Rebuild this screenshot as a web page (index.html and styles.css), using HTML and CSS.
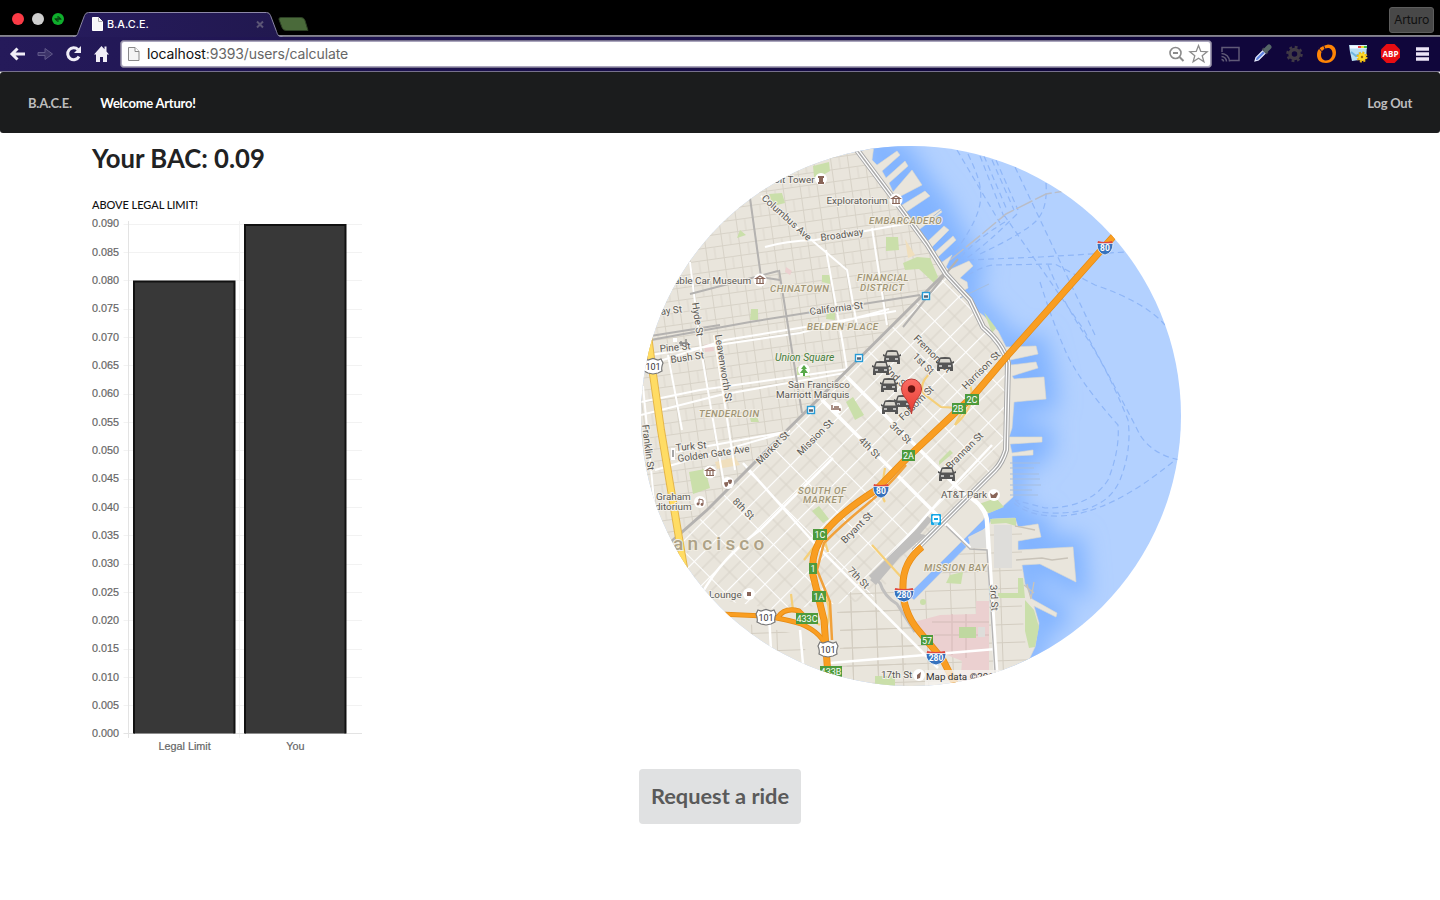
FILE: index.html
```html
<!DOCTYPE html>
<html lang="en">
<head>
<meta charset="utf-8">
<title>B.A.C.E.</title>
<link rel="stylesheet" href="styles.css">
</head>
<body>
<header class="browser">
  <div class="titlebar">
    <svg class="tabs" width="320" height="37" viewBox="0 0 320 37">
      <defs><linearGradient id="tabfill" x1="0" y1="0" x2="1" y2="0"><stop offset="0" stop-color="#261b5c"/><stop offset="1" stop-color="#21184f"/></linearGradient></defs>
      <circle cx="18" cy="19" r="6" fill="#fb3b46"/><circle cx="38" cy="19" r="6" fill="#cfcfcf"/><circle cx="58" cy="19" r="6" fill="#0fae2c"/>
      <path d="M54 18.500h3.500V22zM58.500 16v3.500H62z" fill="#06420f"/><path d="M55 19h6M58 16v6" stroke="#06420f"/>
      <path d="M73 37c4 0 4.500-2 5.500-5l6-16q1-3 4-3h178q3 0 4 3l6 16c1 3 1.500 5 6 5z" fill="url(#tabfill)"/>
      <path d="M73 36.500c4 0 4.500-2 5.500-5l6-16q1-3 4-3h178q3 0 4 3l6 16c1 3 1.500 5 6 5" fill="none" stroke="#8d88a8"/>
      <path d="M92.500 17.500h6l4 4v9h-10z" fill="#f7f7f7" stroke="#fff"/><path d="M98.500 17.500v4h4" fill="none" stroke="#aaa"/>
      <text x="107" y="28" class="tab-title">B.A.C.E.</text>
      <path d="M257 21.500l6 6M263 21.500l-6 6" stroke="#5b5575" stroke-width="2"/>
      <path d="M281 17.500h20q3 0 4 3l3 10h-22q-3 0-4-3l-3-8q-.5-2 2-2z" fill="#4a6a3a" stroke="#2c4024"/>
    </svg>
    <span class="profile">Arturo</span>
  </div>
  <div class="toolbar">
    <svg class="nav-icons" width="120" height="34" viewBox="0 37 120 34">
      <g fill="none" stroke="#f0edf7" stroke-width="3"><path d="M25 54H12M17.500 48.500L12 54l5.500 5.500"/><path d="M78 49.500a6 6 0 1 0 1 7"/></g>
      <path d="M81 46v7h-7z" fill="#f0edf7"/>
      <path d="M38 52.500h7v-4l7.500 5.500-7.500 5.500v-4h-7z" fill="#3c3369" stroke="#60598a"/>
      <path d="M94 54.500L101.500 46l3 3.200V46.500h2v5l2.500 3h-2V62h-4v-5h-3v5h-4v-7.500z" fill="#f0edf7"/>
    </svg>
    <div class="address">
      <svg width="16" height="20" viewBox="0 0 16 20"><path d="M2.500 3.500h6.500l4 4v9H2.500z" fill="#f5f5f5" stroke="#8a8a8a"/><path d="M9 3.500v4h4" fill="#fff" stroke="#8a8a8a"/></svg>
      <span class="url"><b>localhost</b>:9393/users/calculate</span>
      <svg width="44" height="24" viewBox="1167 42 44 24" fill="none" stroke="#8c8c8c"><circle cx="1175.500" cy="53" r="5.500" stroke-width="1.600"/><path d="M1173 53h5M1179.500 57l4 4" stroke-width="2"/><path d="M1198.500 45.500l2.300 5.900 6.300.3-4.900 4 1.700 6.100-5.400-3.500-5.400 3.500 1.700-6.100-4.900-4 6.300-.3z" stroke-width="1.300"/></svg>
    </div>
    <svg class="extensions" width="228" height="34" viewBox="1212 37 228 34">
      <g fill="none" stroke="#605a77" stroke-width="1.500"><path d="M1222 52v-4.500h17v13h-9"/><path d="M1221.500 53.500a8 8 0 0 1 8 8M1221.500 56.500a5 5 0 0 1 5 5M1221.500 59.500a2 2 0 0 1 2 2"/></g>
      <path d="M1255 61l1-3.500 7-7 2.500 2.500-7 7z" fill="#5c80df" stroke="#e8edff" stroke-width="1.200"/><path d="M1262.500 48.500l5 5" stroke="#445" stroke-width="2.500"/><path d="M1266 50l3-3" stroke="#566" stroke-width="5" stroke-linecap="round"/>
      <circle cx="1294.500" cy="54" r="4.500" fill="none" stroke="#403a45" stroke-width="3.500"/><circle cx="1294.500" cy="54" r="7" fill="none" stroke="#403a45" stroke-width="2.500" stroke-dasharray="2.800 2.700"/>
      <path fill-rule="evenodd" d="M1328 44.500c5 0 8 3 8 8 0 6-4 10.500-10 10.500s-9-3-9-8c0-6 4-9 11-10.500zm0 3.500c-4 0-7 3-7 7 0 3 2 5.500 5 5.500 4 0 6.500-3.500 6.500-7 0-3-1.500-5.500-4.500-5.500z" fill="#ff8505"/><path d="M1318 47l5 6M1323 44l2 5" stroke="#1a0c40"/>
      <path d="M1349 45h18l-1 14-14 2-2-9z" fill="#b8dff5"/><path d="M1350 47h17" stroke="#f5fbff" stroke-width="3"/><path d="M1358 47h3" stroke="#e44" stroke-width="2"/><path d="M1361 47h3" stroke="#ed3" stroke-width="2"/><path d="M1364 47h3" stroke="#4b4" stroke-width="2"/><path d="M1351 52l5 4 4-2" fill="none" stroke="#70b5e0" stroke-width="2"/><circle cx="1362" cy="57" r="4" fill="#ffda26"/><circle cx="1362" cy="57" r="4.500" fill="none" stroke="#eebb10" stroke-width="2" stroke-dasharray="2 1.500"/><circle cx="1362" cy="57" r="1.200" fill="#9d7207"/>
      <path d="M1386.500 44h8l5.500 5.500v8l-5.500 5.500h-8l-5.500-5.500v-8z" fill="#e80d12"/><text x="1390.500" y="57.200" class="abp" textLength="16" lengthAdjust="spacingAndGlyphs">ABP</text>
      <path d="M1416 49h13M1416 54h13M1416 59h13" stroke="#ece5f7" stroke-width="3.400"/>
    </svg>
  </div>
</header>
<nav class="navbar"><a class="brand">B.A.C.E.</a><strong>Welcome Arturo!</strong><a class="logout">Log Out</a></nav>
<main class="content">
  <section class="bac">
    <h1>Your BAC: 0.09</h1>
    <p>ABOVE LEGAL LIMIT!</p>
    <svg class="chart" width="271" height="540" viewBox="92 216 271 540">
      <path class="grid" d="M123.500 224.500H362M123.500 252.500H362M123.500 280.500H362M123.500 309.500H362M123.500 337.500H362M123.500 365.500H362M123.500 394.500H362M123.500 422.500H362M123.500 450.500H362M123.500 479.500H362M123.500 507.500H362M123.500 535.500H362M123.500 564.500H362M123.500 592.500H362M123.500 620.500H362M123.500 649.500H362M123.500 677.500H362M123.500 705.500H362M239.500 221V738"/>
      <path class="axis" d="M128.500 221V738M123.500 733.500H362"/>
      <path class="bar" d="M134 733.500V281.500H234.500V733.500M245 733.500V224.900H345.500V733.500"/>
      <g class="ticks"><text x="92" y="227.400">0.090</text><text x="92" y="255.700">0.085</text><text x="92" y="284">0.080</text><text x="92" y="312.400">0.075</text><text x="92" y="340.700">0.070</text><text x="92" y="369">0.065</text><text x="92" y="397.400">0.060</text><text x="92" y="425.700">0.055</text><text x="92" y="454">0.050</text><text x="92" y="482.400">0.045</text><text x="92" y="510.700">0.040</text><text x="92" y="539">0.035</text><text x="92" y="567.400">0.030</text><text x="92" y="595.700">0.025</text><text x="92" y="624">0.020</text><text x="92" y="652.400">0.015</text><text x="92" y="680.700">0.010</text><text x="92" y="709">0.005</text><text x="92" y="737.300">0.000</text><text x="158.500" y="750">Legal Limit</text><text x="286.300" y="750">You</text></g>
    </svg>
  </section>
  <svg class="map" width="540" height="540" viewBox="641 146 540 540">
    <defs>
      <pattern id="north" width="34" height="24" patternUnits="userSpaceOnUse" patternTransform="translate(690 262) rotate(-8)"><path d="M0 .5H34M0 12.500H34M.5 0V24M17.500 0V24" stroke="#d7d2c7"/><path d="M9 0V12M26 12V24" stroke="#dcd7cd"/></pattern>
      <pattern id="soma" width="22" height="34" patternUnits="userSpaceOnUse" patternTransform="translate(847 377) rotate(45)"><path d="M11 0V34M0 17H22" stroke="#d8d3c9"/><path d="M0 0H22M0 0V34" stroke="#fff" stroke-width="2.200"/></pattern>
      <pattern id="bay" width="25" height="18" patternUnits="userSpaceOnUse" patternTransform="translate(950 590) rotate(-2)"><path d="M0 0H25M0 0V18" stroke="#d3cdc1" stroke-width="2"/></pattern>
      <clipPath id="disc"><circle cx="911" cy="416" r="270"/></clipPath>
      <filter id="blur" x="-10%" y="-10%" width="120%" height="120%"><feGaussianBlur stdDeviation="11"/></filter>
      <linearGradient id="pinfill" x1="0" y1="0" x2="0" y2="1"><stop offset="0" stop-color="#fb6d64"/><stop offset="1" stop-color="#e5392f"/></linearGradient>
      <path id="shore" d="M620 130H876L872 160L877 165L897 151L900 155L882 171L886 178L905 161L908 166L889 183L893 192L912 170L922 185L897 198L899 207L925 191L930 196L906 212L912 224L940 209L942 212L916 232L926 243L944 226L949 230L930 249L934 253L953 236L956 240L938 257L941 263L952 255L946 267L949 270L969 261L973 266L960 278L967 282L968 288L961 292L970 297L973 308L984 316L998 331L1006 347L1036 346L1038 354L1010 360L1011 365L1036 362L1038 368L1012 376L1014 379L1044 377L1046 399L1014 402L1012 428L1009 437L1042 437V442L1010 444L1012 453L1033 450V455L1012 456L1013 497L1002 507L986 514L983 520L908 595L914 600L989 524L992 519L1015 518L1018 527L1038 524L1041 537L1018 541L1018 550L1073 547L1076 582L1040 564L1022 565L1025 584L1032 599L1057 613L1056 617L1034 606L1039 623L1035 647L1028 662V710H620Z"/>
      <g id="car"><path d="M-5.500-6Q-5-7 0-7T5.500-6L7-2L9-3L9-1L7.500-.5Q8 1 8 4V7H5V5H-5V7H-8V4Q-8 1-7.500-.5L-9-1L-9-3L-7-2Z" fill="#555"/><path d="M-4.500-5H4.500L5.500-1.500H-5.500Z" fill="#d9d6ce"/><path d="M-6 1.200h3v1.500h-3zM3 1.200h3v1.500h-3z" fill="#ddd"/></g>
      <g id="i80"><path d="M-7-6Q0-4 7-6L8-2H-8Z" fill="#e0483f"/><path d="M-8-3.500H8Q8 6 0 8Q-8 6-8-3.500Z" fill="#3672bd" stroke="#fff" stroke-width=".7"/></g>
      <g id="us"><path d="M-8-7L-5-6L0-7.500L5-6L8-7L10-3Q8 2 9 5L5 7L0 8L-5 7L-9 5Q-8 2-10-3Z" fill="#fff" stroke="#777" stroke-width="1.200"/></g>
      <g id="museum"><circle r="6.500" fill="#fff"/><path d="M-4-1.500L0-4L4-1.500ZM-4 3.500H4M-3-1V3M0-1V3M3-1V3" fill="none" stroke="#896558" stroke-width="1.200"/></g>
      <g id="station"><rect x="-3.500" y="-3.500" width="7" height="7" fill="#fff" stroke="#279bd6" stroke-width="1.400"/><path d="M-2 .5H2" stroke="#567" stroke-width="2.500"/></g>
    </defs>
    <g clip-path="url(#disc)">
      <path d="M641 146h540v540H641z" fill="#b3d1ff"/>
      <use href="#shore" fill="none" stroke="#82b4ff" stroke-width="23" filter="url(#blur)"/>
      <g fill="none" stroke="#8fb6f7" stroke-width="1.200" stroke-dasharray="6 4"><path d="M957 150L1000 223M968 154C985 190 989 205 955 252M980 156L1004 217M984 156L1007 210M992 160L1014 210M996 160L1018 210M1015 167L1095 335M1004 215L1084 330M1046 183Q1048 210 1035 222T980 254M1017 214Q985 246 964 260M1005 222Q975 240 960 258M968 260L1040 257L1126 252M968 275Q985 265 995 265L1055 264L1095 285Q1145 302 1165 325M1048 265Q1062 300 1085 335T1128 420Q1132 450 1120 480Q1105 515 1050 513Q1025 512 1013 498M1040 282Q1052 320 1065 350T1118 425Q1120 450 1108 480Q1090 508 1045 508L1015 500M1014 503Q1030 517 1060 516Q1110 514 1175 460"/><path d="M1084 330Q1125 405 1140 435Q1153 455 1180 460"/></g>
      <path d="M950 260Q975 240 1006 214L1046 194L1065 191" fill="none" stroke="#b9bdc8" stroke-width="1.500" stroke-dasharray="18 3"/>
      <use href="#shore" fill="#e9e5dc" stroke="#dedacf" stroke-width=".6"/>
      <path d="M641 146H858L900 210L945 273L640 576Z" fill="url(#north)"/>
      <path d="M945 273L978 318L1006 356L1008 450L975 492L905 565L870 600L780 610L720 600L655 565Z" fill="url(#soma)"/>
      <path d="M917 600L984 528H1022V610L1030 686H850L835 600Z" fill="url(#bay)"/>
      <path d="M730 620L800 635L820 690H700ZM840 600L880 570L905 610L915 640L900 680H840Z" fill="url(#bay)"/>
      <g fill="#cadfaa"><path d="M813 166l16-4 1 9-7 4v8l-9-6zM769 194l13-1 3 10-12 3zM740 230l6 5-9 3zM886 237h12l1 13-13 1zM903 263l14-6 13 1 8 19-4 6-15-14-14 1zM822 275h8v9l-8-2zM751 309h7v11h-8zM827 312h8v8l-9-1zM689 472l16-3 5 19-17 6zM846 402l7-5 11 18-9 5zM812 511l7-5 10 13-6 4zM939 461l11-11 3 3-14 12zM750 418l7-1 2 5h-8zM797 367h13v10h-13zM990 519l26-1v8l-10-3-15 1zM1025 600l9 10 5 17-4 20-6 1-4-17zM998 593h20v-15h5l2 20h-27zM950 575l13-3-2 12-15-1zM976 505l20-7 8 9-15 6zM875 676h20v10h-20zM984 312l12 16-4 5z"/><circle cx="923" cy="602" r="3"/></g>
      <path d="M914 622L940 615L976 614V601H989V686L960 686L962 661L930 648Z" fill="#ebd0d0"/><path d="M932 622H989M934 635H989M952 614V655M966 614V658" stroke="#dcc2c0" stroke-width="1.500"/><path d="M959 627h17v11h-17z" fill="#bfd8a0"/><path d="M978 627h7v10h-7zM994 525h18v43h-18zM968 537l18-9v20h-15z" fill="#deddda"/><path d="M704 345l9-2 1 8-9 1zM786 267l6 4-2 4-5-3z" fill="#ecd0d0"/><path d="M905 239l10 16-7 3zM715 462l20-5 5 8-23 4z" fill="#f0dfbd"/>
      <path d="M1015 526l20 4M1016 560l26-2 10 2 16-2M1027 584l4 15 3-17M1034 593l-10-8" fill="none" stroke="#c9c3b8" stroke-width="1.300"/>
      <path d="M1010 463h30M1010 468h24M1010 474h29M1010 479h30M1010 485h31M1010 490h22M1010 495h28M960 298l29-14M930 219l11-9" stroke="#a6bddd"/>
      <g fill="none" stroke="#fff">
        <path d="M761 196L795 226L847 270L857 325M765 247Q785 241 815 240L910 223M690 262L701 350L724 484M826 250L843 345L847 370M872 228L887 325M641 367L725 340L805 327L896 311M641 402L700 390L848 369M641 415L720 395L845 373M650 355L800 333L889 309M676 452L790 431M655 470L790 431M714 335L735 470M643 386L655 510M668 355L682 430" stroke-width="2"/>
        <path d="M847 377L970 500M822 400L970 548" stroke-width="3.500"/><path d="M743 463L816 545L938 668M707 510L890 328M701 595Q722 557 760 530L833 458M880 568L940 500L992 445M769 615L771 650M800 630L803 664M830 663L996 649" stroke-width="2.500"/><path d="M970 497Q986 508 987 521L997 686" stroke-width="4.500"/>
      </g>
      <g fill="none" stroke="#b4b2b0" stroke-width="2"><path d="M750 198L761 277L780 280M690 294L778 271M645 341L750 322L920 295M779 270L802 413M644 337L720 325M903 327L944 276L958 259"/><path d="M655 556L707 510L945 273" stroke-width="3"/></g>
      <g fill="none"><path d="M854 146L896 202L927 244L946 274L970 300L983 327Q1003 344 1008 363L1006 450Q1002 463 995 470L914 551" stroke="#aaa" stroke-width="6"/><path d="M854 146L896 202L927 244L946 274L970 300L983 327Q1003 344 1008 363L1006 450Q1002 463 995 470L914 551" stroke="#fff" stroke-width="4"/><path d="M854 146L896 202L927 244L946 274L970 300L983 327Q1003 344 1008 363L1006 450Q1002 463 995 470L914 551" stroke="#aaa" stroke-width="1.500"/></g>
      <path d="M871 578L918 532L930 518" fill="none" stroke="#c0bfbe" stroke-width="6"/><path d="M873 577L880 583Q884 596 897 604L915 632" fill="none" stroke="#c0bfbe" stroke-width="3"/><path d="M870 580L915 533L926 535L900 557L876 585Z" fill="#c0bfbe"/><path d="M946 526L970 549L987 550L996 686" fill="none" stroke="#b6b5b4" stroke-width="1.500"/>
      <g fill="none" stroke="#f5cf78" stroke-width="2.200"><path d="M934 370Q917 383 924 394L941 407L961 408M970 385Q977 405 955 425L963 410M885 468Q880 496 885 502M804 560L823 535L828 552M791 594L793 610L820 625M872 545L902 578Q905 607 912 620M820 590Q835 605 825 632"/></g>
      <path d="M648 335L653 374L661 430L674 508L686 580" stroke="#e4b64b" stroke-width="8" fill="none"/><path d="M648 335L653 374L661 430L674 508L686 580" stroke="#ffdc64" stroke-width="6" fill="none"/>
      <g fill="none" stroke="#e78b12" stroke-width="7"><path d="M1120 229L1008 355L974 395L908 457L876 490Q840 513 825 532Q810 553 813 575L824 620L829 690"/><path d="M720 614L765 616Q790 620 801 624Q823 633 827 650M778 617Q785 607 799 611L806 618" stroke-width="5"/><path d="M922 547Q903 562 903 585Q902 610 918 630L943 660L957 688"/></g>
      <g fill="none" stroke="#f99e22" stroke-width="5.500"><path d="M1120 229L1008 355L974 395L908 457L876 490Q840 513 825 532Q810 553 813 575L824 620L829 690"/><path d="M720 614L765 616Q790 620 801 624Q823 633 827 650M778 617Q785 607 799 611L806 618" stroke-width="3.500"/><path d="M922 547Q903 562 903 585Q902 610 918 630L943 660L957 688"/></g>
      <path d="M906 465Q885 490 865 506T824 543L817 570L830 602L832 640" fill="none" stroke="#f1a13a" stroke-width="2.500"/>
      <g class="street">
        <text x="774" y="183">oit Tower</text><text x="826.500" y="203.500">Exploratorium</text><text x="674" y="283.500">able Car Museum</text><text x="821" y="241" transform="rotate(-8 821 241)">Broadway</text><text x="761" y="199" transform="rotate(42 761 199)">Columbus Ave</text><text x="810" y="315" transform="rotate(-7 810 315)">California St</text><text x="661" y="315" transform="rotate(-7 661 315)">ay St</text><text x="692" y="303" transform="rotate(82 692 303)">Hyde St</text><text x="660" y="352" transform="rotate(-5 660 352)">Pine St</text><text x="671" y="363" transform="rotate(-8 671 363)">Bush St</text><text x="715" y="335" transform="rotate(81 715 335)">Leavenworth St</text><text x="642" y="425" transform="rotate(83 642 425)">Franklin St</text><text x="788" y="388">San Francisco</text><text x="776" y="397.500">Marriott Marquis</text><text x="676" y="451" transform="rotate(-5 676 451)">Turk St</text><text x="678" y="462" transform="rotate(-8 678 462)">Golden Gate Ave</text><text x="760" y="465" transform="rotate(-45 760 465)">Market St</text><text x="801" y="456" transform="rotate(-45 801 456)">Mission St</text><text x="656" y="500">Graham</text><text x="655" y="509.500">ditorium</text><text x="732" y="502" transform="rotate(45 732 502)">8th St</text><text x="858" y="441" transform="rotate(45 858 441)">4th St</text><text x="889" y="426" transform="rotate(45 889 426)">3rd St</text><text x="912" y="357" transform="rotate(45 912 357)">1st St</text><text x="913" y="339" transform="rotate(45 913 339)">Fremont St</text><text x="884" y="370" transform="rotate(45 884 370)">2nd St</text><text x="903" y="421" transform="rotate(-45 903 421)">Folsom St</text><text x="966" y="390" transform="rotate(-45 966 390)">Harrison St</text><text x="950" y="470" transform="rotate(-45 950 470)">Brannan St</text><text x="845" y="544" transform="rotate(-45 845 544)">Bryant St</text><text x="847" y="571" transform="rotate(45 847 571)">7th St</text><text x="941" y="498">AT&amp;T Park</text><text x="990" y="585" transform="rotate(87 990 585)">3rd St</text><text x="709" y="598">Lounge</text><text x="881" y="678">17th St</text>
      </g>
      <g class="district"><text x="869" y="224">EMBARCADERO</text><text x="857" y="281">FINANCIAL</text><text x="860" y="291">DISTRICT</text><text x="770" y="292">CHINATOWN</text><text x="807" y="330">BELDEN PLACE</text><text x="699" y="417">TENDERLOIN</text><text x="798" y="494">SOUTH OF</text><text x="803" y="503">MARKET</text><text x="924" y="571">MISSION BAY</text></g>
      <text class="city" x="673" y="550">ancisco</text><text class="park" x="775" y="361">Union Square</text>
      <use href="#museum" x="896" y="200"/><use href="#museum" x="760" y="280"/><use href="#museum" x="710" y="472"/><g fill="#fff"><circle cx="821" cy="179" r="6"/><circle cx="804" cy="370" r="6"/><circle cx="836" cy="408" r="6"/><circle cx="728" cy="483" r="6"/><circle cx="700" cy="502" r="6"/><circle cx="749" cy="594" r="6"/><circle cx="994" cy="495" r="6"/><circle cx="919" cy="675" r="6"/></g>
      <path d="M818 176h6v2h-1v4h1v2h-6v-2h1v-4h-1zM747 592h4v4h-4zM724 483q0-1 4-1v3q-1 2-2 2t-2-4zM728 480q3-1 4 0 0 4-2 4t-2-4zM990 493l3 2 4-3 1 2-2 4h-5zM917 675l4-3-1 6-3 1z" fill="#896558"/><path d="M832 405v5M833 409h7v2M834 407h5" fill="none" stroke="#896558" stroke-width="1.400"/><path d="M699 504v-5l4 1v4" fill="none" stroke="#896558"/><circle cx="698" cy="504" r="1.400" fill="#896558"/><circle cx="702" cy="504.500" r="1.400" fill="#896558"/><path d="M804 365l3 4h-2l3 4h-3v3h-2v-3h-3l3-4h-2z" fill="#57a947"/>
      <use href="#station" x="926" y="296"/><use href="#station" x="859" y="358"/><use href="#station" x="811" y="410"/><rect x="931" y="514" width="10" height="11" rx="1" fill="#13a6e6"/><path d="M933 516h6v6h-6zM934 524h4" fill="#fff" stroke="#fff"/><path d="M934 518h4v2h-4z" fill="#13a6e6"/><path d="M671 448h4v12h-4zM673 338h4v4h-4z" fill="#fff"/><path d="M673 450v7M681 341v5M686 339v7M679 343h9" stroke="#888" stroke-width="1.500"/>
      <g class="exits"><path d="M952 403h14v11h-14zM965 394h14v11h-14zM902 450h13v11h-13zM813 529h14v11h-14zM809 563h8v11h-8zM812 591h14v11h-14zM796 613h22v11h-22zM820 666h22v11h-22zM921 635h12v10h-12z"/><text x="958" y="412">2B</text><text x="972" y="403">2C</text><text x="908.500" y="459">2A</text><text x="820" y="538">1C</text><text x="813" y="572">1</text><text x="819" y="600">1A</text><text x="807" y="622">433C</text><text x="831" y="675">433B</text><text x="927" y="644">57</text></g>
      <g class="shield"><use href="#i80" x="1105" y="247"/><use href="#i80" x="881" y="490"/><use href="#i80" transform="translate(904 594) scale(1.250 1)"/><use href="#i80" transform="translate(936 657) scale(1.250 1)"/><text x="1105" y="251">80</text><text x="881" y="494">80</text><text x="904" y="598">280</text><text x="936" y="661">280</text></g>
      <g class="route"><use href="#us" x="653" y="366"/><use href="#us" x="766" y="617"/><use href="#us" x="828" y="649"/><text x="653" y="370">101</text><text x="766" y="621">101</text><text x="828" y="653">101</text></g>
      <use href="#car" x="892" y="357"/><use href="#car" x="881" y="368"/><use href="#car" x="889" y="385"/><use href="#car" x="903" y="402"/><use href="#car" x="890" y="407"/><use href="#car" x="945" y="364"/><use href="#car" x="947" y="474"/>
      <path d="M911.500 414Q910 403 904.500 397Q901.500 393 901.500 389A10 10 0 0 1 921.500 389Q921.500 393 918.500 397Q913 403 911.500 414Z" fill="url(#pinfill)" stroke="#bd3c36"/><circle cx="911.500" cy="389" r="3.700" fill="#681410"/>
      <path d="M925 670h85v20h-85z" fill="#f5f3ef" opacity=".8"/><text class="credit" x="926" y="680">Map data ©2016</text>
    </g>
  </svg>
</main>
<div class="actions"><button>Request a ride</button></div>
</body>
</html>
```

FILE: styles.css
```css
* { box-sizing: border-box; }
body { margin: 0; width: 1440px; height: 900px; overflow: hidden; background: #fff; font-family: Lato, "Liberation Sans", sans-serif; }
svg { display: block; }
.browser { background: #000; }
.titlebar { height: 37px; display: flex; justify-content: space-between; align-items: flex-start; background: linear-gradient(#000 35px, #8c8c90 35px, #716d83); }
.tab-title { font: 500 10.800px Inter, sans-serif; fill: #fff; }
.profile { width: 45px; height: 26px; margin: 7px 6px 0 0; border: 1px solid #5d5d5d; border-radius: 3px; background: #484848; color: #111; font: 12.300px/23px Inter, sans-serif; letter-spacing: -.2px; text-align: center; }
.toolbar { height: 35px; display: flex; background: linear-gradient(90deg, #251a5a, #10063b 80%); border-bottom: 1px solid #77718d; }
.address { width: 1092px; height: 28px; margin-top: 3px; padding: 0 0 0 5px; display: flex; align-items: center; background: #fff; border: 1px solid #77718d; border-radius: 4px; box-shadow: inset 0 0 0 1px #aaa5bd; }
.url { flex: 1; padding: 0 0 2px 5px; color: #666; font: 14px Inter, sans-serif; letter-spacing: -.12px; }
.url b { color: #111; font-weight: 400; }
.abp { font: bold 9.500px "Open Sans", sans-serif; fill: #fff; text-anchor: middle; }
.navbar { height: 61px; display: flex; align-items: center; gap: 28.500px; padding: 0 28px; background: #1b1c1d; border-radius: 3px; color: #fff; font-size: 13px; letter-spacing: -.25px; }
.navbar a { color: #bdbdbd; font-weight: 700; }
.navbar .logout { margin-left: auto; }
.content { display: grid; grid-template-columns: 549px 540px; padding: 13px 0 0 92px; }
.bac h1 { margin: -4px 0 0; color: #212223; font-size: 25.700px; line-height: 32px; font-weight: 700; white-space: nowrap; }
.bac p { margin: 23px 0 0; height: 19px; color: #111; font-size: 11px; line-height: 16px; letter-spacing: -.05px; font-weight: 500; }
.grid { stroke: #f2f2f2; fill: none; }
.axis { stroke: #e3e3e3; fill: none; }
.bar { fill: #383838; stroke: #111; stroke-width: 2; }
.ticks { font: 10.800px "Liberation Sans", sans-serif; fill: #666; stroke: #666; stroke-width: .2px; }
.map text { font-family: Roboto, sans-serif; }
.street { font-size: 9.900px; fill: #5b5954; stroke: #f3f0ea; stroke-width: 2px; paint-order: stroke; }
.district { font-size: 9.700px; font-weight: 500; font-style: italic; fill: #a09575; stroke: #f1ede4; stroke-width: 2px; paint-order: stroke; letter-spacing: .5px; }
.city { font-size: 19px; font-weight: 500; letter-spacing: 4.200px; fill: #ada186; stroke: #f0ece2; stroke-width: 2px; paint-order: stroke; }
.park { font-size: 10.300px; font-style: italic; fill: #447c3c; stroke: #f0ece2; stroke-width: 2px; paint-order: stroke; }
.exits { fill: #4d9a3c; font-size: 9px; text-anchor: middle; }
.exits text { fill: #fff; }
.shield text { font-size: 8.500px; font-weight: 700; fill: #fff; text-anchor: middle; }
.route text { font-size: 9px; fill: #333; text-anchor: middle; }
.credit { font-size: 9.800px; fill: #333; }
.actions { display: flex; justify-content: center; padding-top: 13px; }
.actions button { width: 162px; height: 55px; border: 0; border-radius: 4px; background: #e0e1e2; color: #5a5a5a; font: 700 21.800px Lato, sans-serif; padding: 0 0 2px; }
```
